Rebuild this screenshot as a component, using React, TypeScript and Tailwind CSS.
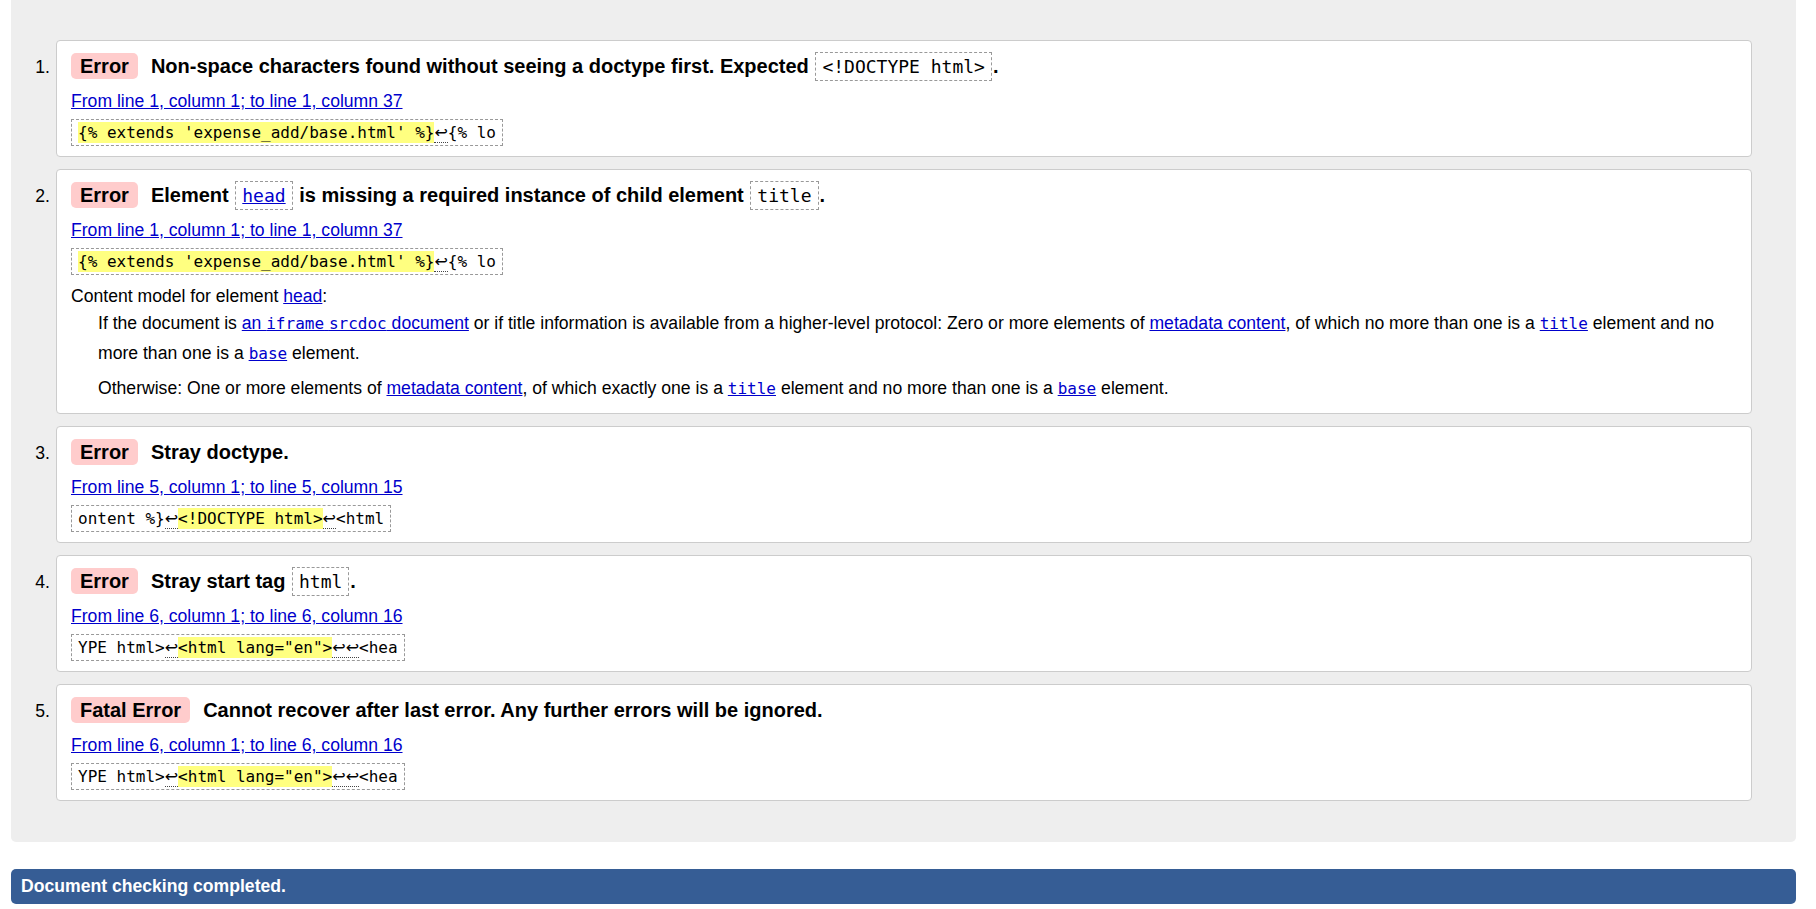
import type { ReactNode } from 'react';

const mono = "font-['DejaVu_Sans_Mono',monospace] text-[16px] leading-none";

function Badge({ label }: { label: string }) {
  return (
    <span className="mr-[13px] inline-block rounded-[5px] bg-[#fcc] px-[9px] leading-[26px]">
      {label}
    </span>
  );
}

// dashed inline box used inside message titles
function TitleCode({ children }: { children: ReactNode }) {
  return (
    <code className="mx-[1px] border border-dashed border-[#999] px-[6px] py-[3px] font-['DejaVu_Sans_Mono',monospace] text-[18px] font-normal leading-none">
      {children}
    </code>
  );
}

function Ret({ n = 1 }: { n?: number }) {
  return (
    <span className="border-b border-dotted border-[#444] font-['DejaVu_Sans',sans-serif] text-[16px] leading-none">
      {'↩'.repeat(n)}
    </span>
  );
}

function Hi({ children }: { children: ReactNode }) {
  return <mark className="bg-[#ffff80] py-[1px] text-black">{children}</mark>;
}

function Extract({ children }: { children: ReactNode }) {
  return (
    <div className="mt-[6px] flex">
      <code className="block h-[27px] whitespace-pre border border-dashed border-[#999] px-[6px] font-['DejaVu_Sans_Mono',monospace] text-[16px] leading-[25px] text-black">
        {children}
      </code>
    </div>
  );
}

function Location({ text }: { text: string }) {
  return (
    <div className="mt-[10px] h-[24px] leading-[24px]">
      <a href="#" className="text-[#00c] underline">
        {text}
      </a>
    </div>
  );
}

function Message({ n, children }: { n: number; children: ReactNode }) {
  return (
    <li className="flex">
      <div className="w-[45px] shrink-0 pr-[6px] pt-[14px] text-right text-[17.6px] leading-[26px]">{n}.</div>
      <div className="flex-1 rounded-[4px] border border-[#ccc] bg-white px-[14px] pb-[10px] pt-[12px]">
        {children}
      </div>
    </li>
  );
}

function Title({ badge, children }: { badge: string; children: ReactNode }) {
  return (
    <p className="h-[26px] text-[20px] font-bold leading-[26px]">
      <Badge label={badge} />
      {children}
    </p>
  );
}

export default function App() {
  return (
    <div className="min-h-[909px] bg-white font-['Liberation_Sans',Arial,sans-serif] text-[17.6px] text-black">
      <div className="ml-[11px] mr-[20px] rounded-b-[5px] bg-[#eee] pb-[41px] pr-[44px] pt-[40px]">
        <ol className="flex flex-col gap-[12px]">
          <Message n={1}>
            <Title badge="Error">
              Non-space characters found without seeing a doctype first. Expected{' '}
              <TitleCode>&lt;!DOCTYPE html&gt;</TitleCode>.
            </Title>
            <Location text="From line 1, column 1; to line 1, column 37" />
            <Extract>
              <Hi>{"{% extends 'expense_add/base.html' %}"}</Hi>
              <Ret />
              {'{% lo'}
            </Extract>
          </Message>

          <Message n={2}>
            <Title badge="Error">
              Element{' '}
              <TitleCode>
                <a href="#" className="text-[#00c] underline">
                  head
                </a>
              </TitleCode>{' '}
              is missing a required instance of child element <TitleCode>title</TitleCode>.
            </Title>
            <Location text="From line 1, column 1; to line 1, column 37" />
            <Extract>
              <Hi>{"{% extends 'expense_add/base.html' %}"}</Hi>
              <Ret />
              {'{% lo'}
            </Extract>
            <p className="mt-[9px] h-[24px] leading-[24px]">
              Content model for element{' '}
              <a href="#" className="text-[#00c] underline">
                head
              </a>
              :
            </p>
            <div className="pl-[27px]">
              <p className="h-[60px] leading-[30px]">
                If the document is{' '}
                <a href="#" className="text-[#00c] underline">
                  an <code className={mono}>iframe</code> <code className={mono}>srcdoc</code> document
                </a>{' '}
                or if title information is available from a higher-level protocol: Zero or more elements of{' '}
                <a href="#" className="text-[#00c] underline">
                  metadata content
                </a>
                , of which no more than one is a{' '}
                <a href="#" className={`${mono} text-[#00c] underline`}>
                  title
                </a>{' '}
                element and no more than one is a{' '}
                <a href="#" className={`${mono} text-[#00c] underline`}>
                  base
                </a>{' '}
                element.
              </p>
              <p className="mt-[5px] h-[30px] leading-[30px]">
                Otherwise: One or more elements of{' '}
                <a href="#" className="text-[#00c] underline">
                  metadata content
                </a>
                , of which exactly one is a{' '}
                <a href="#" className={`${mono} text-[#00c] underline`}>
                  title
                </a>{' '}
                element and no more than one is a{' '}
                <a href="#" className={`${mono} text-[#00c] underline`}>
                  base
                </a>{' '}
                element.
              </p>
            </div>
          </Message>

          <Message n={3}>
            <Title badge="Error">Stray doctype.</Title>
            <Location text="From line 5, column 1; to line 5, column 15" />
            <Extract>
              {'ontent %}'}
              <Ret />
              <Hi>{'<!DOCTYPE html>'}</Hi>
              <Ret />
              {'<html'}
            </Extract>
          </Message>

          <Message n={4}>
            <Title badge="Error">
              Stray start tag <TitleCode>html</TitleCode>.
            </Title>
            <Location text="From line 6, column 1; to line 6, column 16" />
            <Extract>
              {'YPE html>'}
              <Ret />
              <Hi>{'<html lang="en">'}</Hi>
              <Ret n={2} />
              {'<hea'}
            </Extract>
          </Message>

          <Message n={5}>
            <Title badge="Fatal Error">Cannot recover after last error. Any further errors will be ignored.</Title>
            <Location text="From line 6, column 1; to line 6, column 16" />
            <Extract>
              {'YPE html>'}
              <Ret />
              <Hi>{'<html lang="en">'}</Hi>
              <Ret n={2} />
              {'<hea'}
            </Extract>
          </Message>
        </ol>
      </div>

      <div className="ml-[11px] mr-[20px] mt-[27px] h-[35px] rounded-[5px] bg-[#365d95] px-[10px] text-[17.6px] font-bold leading-[35px] text-white">
        Document checking completed.
      </div>
    </div>
  );
}
